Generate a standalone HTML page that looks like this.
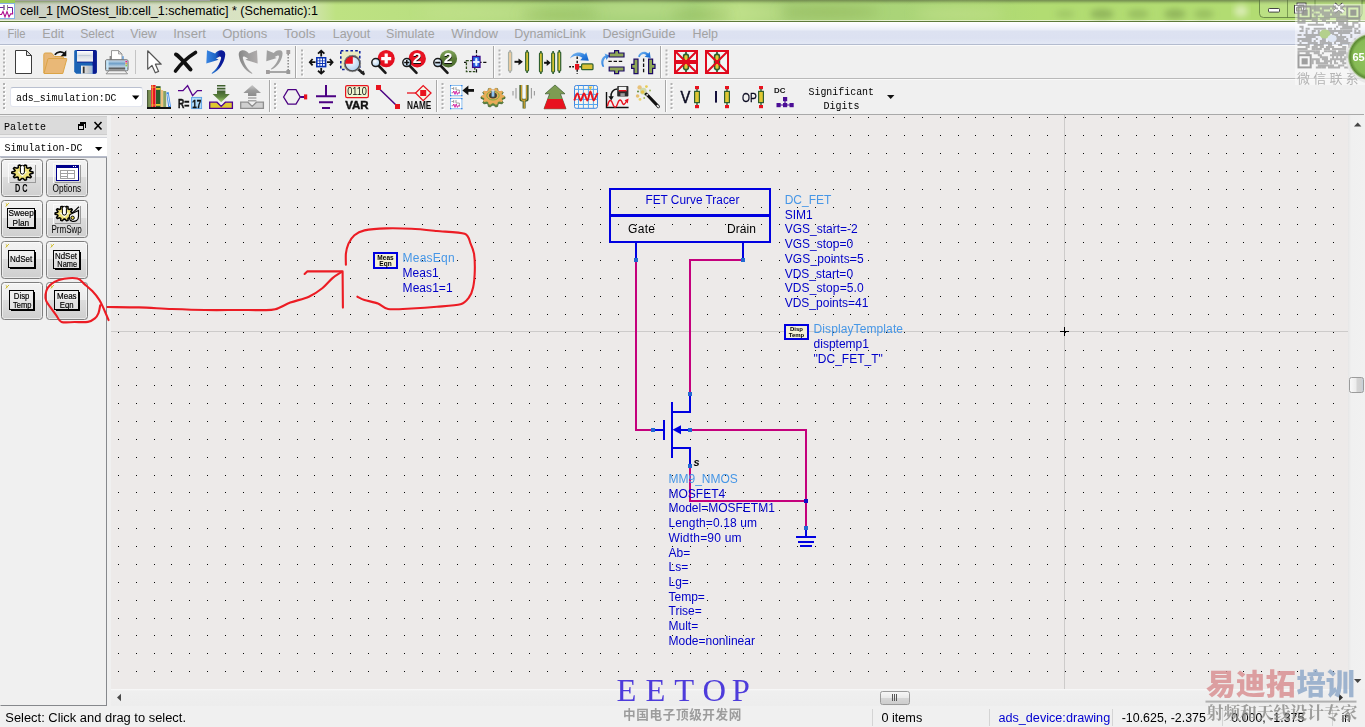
<!DOCTYPE html>
<html><head><meta charset="utf-8"><title>cell_1</title>
<style>
html,body{margin:0;padding:0}
body{width:1365px;height:727px;overflow:hidden;position:relative;background:#f0f0f0;font-family:"Liberation Sans",sans-serif;font-size:12px}
div{position:absolute;box-sizing:border-box}
svg{position:absolute;left:0;top:0}
.sans{font-family:"Liberation Sans",sans-serif}
.mono{font-family:"Liberation Mono","DejaVu Sans Mono",monospace}
</style></head><body>
<!-- title bar -->
<div style="left:0;top:0;width:1365px;height:22px;background:linear-gradient(to right,#c8cdc0 0,#ced3c6 60px,#d4dcc4 150px,#d9e4c2 250px,#d4e4b4 308px,#bee282 336px,#b8de80 450px,#a8d27a 600px,#a6d27a 690px,#b8de82 740px,#a8d078 790px,#aad478 900px,#b2dc72 1040px,#b2dc72 1365px)"></div>
<div style="left:0;top:0;width:1365px;height:22px;background:linear-gradient(to bottom,rgba(105,125,75,.85) 0,rgba(110,135,75,.6) 1.5px,rgba(120,150,80,.25) 3px,rgba(140,150,120,0) 5px,rgba(255,255,255,0) 19.5px,rgba(240,246,226,.85) 20px,rgba(240,246,226,.85) 21px)"></div><div style="left:15px;top:0;width:195px;height:1px;background:#a2a2a2"></div>
<svg width="1365" height="22" viewBox="0 0 1365 22"><defs><filter id="bl" x="-20%" y="-50%" width="140%" height="200%"><feGaussianBlur stdDeviation="3"/></filter><filter id="bl2" x="-20%" y="-50%" width="140%" height="200%"><feGaussianBlur stdDeviation="6"/></filter></defs>
<g filter="url(#bl)" fill="#7a9c4c" fill-opacity=".6"><ellipse cx="1065" cy="14" rx="10" ry="4" fill-opacity=".3"/><ellipse cx="1102" cy="14" rx="12" ry="5"/><ellipse cx="1138" cy="14" rx="11" ry="4.5" fill-opacity=".45"/><ellipse cx="1175" cy="14" rx="11" ry="5"/><ellipse cx="1204" cy="14" rx="10" ry="4.5" fill-opacity=".45"/></g>
<ellipse cx="1241" cy="11" rx="7" ry="6" fill="#e4f0c4" fill-opacity=".8" filter="url(#bl)"/>
<g filter="url(#bl2)" fill="#c6e294" fill-opacity=".55"><ellipse cx="480" cy="13" rx="60" ry="6"/><ellipse cx="640" cy="9" rx="50" ry="5"/><ellipse cx="745" cy="13" rx="40" ry="6"/><ellipse cx="960" cy="14" rx="45" ry="6"/></g>
<g filter="url(#bl2)" fill="#8aae50" fill-opacity=".45"><ellipse cx="560" cy="15" rx="40" ry="5"/><ellipse cx="700" cy="15" rx="30" ry="5"/><ellipse cx="830" cy="12" rx="50" ry="6"/></g>
</svg>
<div style="left:0;top:21px;width:1365px;height:1px;background:#5e7a3a"></div>
<!-- menu bar -->
<div style="left:0;top:22px;width:1365px;height:22px;background:linear-gradient(to bottom,#ffffff 0,#f6f7fc 4px,#e9edf7 8px,#dde2f1 9px,#dce1f1 16px,#e3e8f5 22px)"></div>
<div style="left:0;top:44px;width:1365px;height:1px;background:#b4bccf"></div>
<div style="left:0;top:45px;width:1365px;height:1px;background:#fbfbfb"></div>
<!-- toolbars -->
<div style="left:0;top:46px;width:1365px;height:68px;background:#f0f0f0"></div>
<div style="left:0;top:78px;width:1365px;height:1px;background:#b9b9b9"></div>
<div style="left:0;top:79px;width:1365px;height:1px;background:#fafafa"></div>
<div style="left:0;top:114px;width:1364px;height:1px;background:#a9a9a9"></div>
<!-- canvas -->
<div style="left:111px;top:115px;width:1237px;height:574px;background:#edeae9"></div>
<!-- canvas grid -->
<svg width="1365" height="727" viewBox="0 0 1365 727" shape-rendering="crispEdges">
<defs><mask id="rowmask" maskUnits="userSpaceOnUse" x="0" y="0" width="1365" height="727"><path fill="#fff" d="M111 117h1237v1h-1237zM111 135h1237v1h-1237zM111 153h1237v1h-1237zM111 171h1237v1h-1237zM111 189h1237v1h-1237zM111 207h1237v1h-1237zM111 224h1237v1h-1237zM111 242h1237v1h-1237zM111 260h1237v1h-1237zM111 278h1237v1h-1237zM111 296h1237v1h-1237zM111 314h1237v1h-1237zM111 332h1237v1h-1237zM111 350h1237v1h-1237zM111 367h1237v1h-1237zM111 385h1237v1h-1237zM111 403h1237v1h-1237zM111 421h1237v1h-1237zM111 439h1237v1h-1237zM111 457h1237v1h-1237zM111 475h1237v1h-1237zM111 492h1237v1h-1237zM111 510h1237v1h-1237zM111 528h1237v1h-1237zM111 546h1237v1h-1237zM111 564h1237v1h-1237zM111 582h1237v1h-1237zM111 600h1237v1h-1237zM111 618h1237v1h-1237zM111 635h1237v1h-1237zM111 653h1237v1h-1237zM111 671h1237v1h-1237z"/></mask></defs>
<path d="M1064 115v574h1v-574zM111 331h1237v1h-1237z" fill="#cdcbca"/>
<g mask="url(#rowmask)"><path fill="#0a0a0a" d="M118 115h1v574h-1zM136 115h1v574h-1zM154 115h1v574h-1zM171 115h1v574h-1zM189 115h1v574h-1zM207 115h1v574h-1zM225 115h1v574h-1zM243 115h1v574h-1zM261 115h1v574h-1zM279 115h1v574h-1zM297 115h1v574h-1zM314 115h1v574h-1zM332 115h1v574h-1zM350 115h1v574h-1zM368 115h1v574h-1zM386 115h1v574h-1zM404 115h1v574h-1zM422 115h1v574h-1zM439 115h1v574h-1zM457 115h1v574h-1zM475 115h1v574h-1zM493 115h1v574h-1zM511 115h1v574h-1zM529 115h1v574h-1zM547 115h1v574h-1zM565 115h1v574h-1zM582 115h1v574h-1zM600 115h1v574h-1zM618 115h1v574h-1zM636 115h1v574h-1zM654 115h1v574h-1zM672 115h1v574h-1zM690 115h1v574h-1zM707 115h1v574h-1zM725 115h1v574h-1zM743 115h1v574h-1zM761 115h1v574h-1zM779 115h1v574h-1zM797 115h1v574h-1zM815 115h1v574h-1zM833 115h1v574h-1zM850 115h1v574h-1zM868 115h1v574h-1zM886 115h1v574h-1zM904 115h1v574h-1zM922 115h1v574h-1zM940 115h1v574h-1zM958 115h1v574h-1zM975 115h1v574h-1zM993 115h1v574h-1zM1011 115h1v574h-1zM1029 115h1v574h-1zM1047 115h1v574h-1zM1065 115h1v574h-1zM1083 115h1v574h-1zM1101 115h1v574h-1zM1118 115h1v574h-1zM1136 115h1v574h-1zM1154 115h1v574h-1zM1172 115h1v574h-1zM1190 115h1v574h-1zM1208 115h1v574h-1zM1226 115h1v574h-1zM1243 115h1v574h-1zM1261 115h1v574h-1zM1279 115h1v574h-1zM1297 115h1v574h-1zM1315 115h1v574h-1zM1333 115h1v574h-1z"/></g>
</svg>
<!-- title & menu -->
<div style="left:0;top:0;width:15px;height:4px;background:#9ccb58"></div>
<div style="left:0;top:3px;width:15px;height:16px;background:#fff;border:1px solid #86b4e4;border-left:none"></div>
<svg width="1365" height="727" viewBox="0 0 1365 727" font-family="'Liberation Sans',sans-serif" font-size="12.5">
<path d="M0 7.5h4M4 5v5M7.5 5v5M7.5 7.5h5v5" stroke="#6a20a0" stroke-width="1" fill="none"/><path d="M4 5v5M7.5 5v5" stroke="#888" stroke-width="1" fill="none"/><path d="M0 14.5l1.5 0 1.5-3 2 5.4 2-5.4 2 5.4 1.6-3h2v-2" stroke="#b01090" stroke-width="1.1" fill="none"/>
<text x="20" y="14.8" textLength="298" lengthAdjust="spacingAndGlyphs" fill="#000">cell_1 [MOStest_lib:cell_1:schematic] * (Schematic):1</text>
<g fill="#a2a2a2">
<text x="7.5" y="37.7" textLength="18.1" lengthAdjust="spacingAndGlyphs">File</text>
<text x="42.3" y="37.7" textLength="21.7" lengthAdjust="spacingAndGlyphs">Edit</text>
<text x="80.2" y="37.7" textLength="33.9" lengthAdjust="spacingAndGlyphs">Select</text>
<text x="130.3" y="37.7" textLength="26.4" lengthAdjust="spacingAndGlyphs">View</text>
<text x="173.2" y="37.7" textLength="32.8" lengthAdjust="spacingAndGlyphs">Insert</text>
<text x="222.2" y="37.7" textLength="45.1" lengthAdjust="spacingAndGlyphs">Options</text>
<text x="284" y="37.7" textLength="31.4" lengthAdjust="spacingAndGlyphs">Tools</text>
<text x="332.7" y="37.7" textLength="37.6" lengthAdjust="spacingAndGlyphs">Layout</text>
<text x="386.1" y="37.7" textLength="48.5" lengthAdjust="spacingAndGlyphs">Simulate</text>
<text x="451.3" y="37.7" textLength="46.7" lengthAdjust="spacingAndGlyphs">Window</text>
<text x="514.2" y="37.7" textLength="71.6" lengthAdjust="spacingAndGlyphs">DynamicLink</text>
<text x="602.5" y="37.7" textLength="72.9" lengthAdjust="spacingAndGlyphs">DesignGuide</text>
<text x="692.4" y="37.7" textLength="25.6" lengthAdjust="spacingAndGlyphs">Help</text>
</g>
<path d="M1259.5 0V13.5Q1259.5 17.5 1263.5 17.5H1358Q1362 17.5 1362 13.5V0" fill="rgba(255,255,255,.12)" stroke="#4f6a34" stroke-opacity=".7" stroke-width="1"/><path d="M1287.5 0V17.5M1315 0V17.5" stroke="#4f6a34" stroke-opacity=".6" stroke-width="1"/>
<rect x="1268.5" y="8.5" width="11" height="3.6" rx=".8" fill="#fff" stroke="#444" stroke-width="1"/>
<g fill="none" stroke="#444" stroke-width="1"><rect x="1297" y="3" width="9" height="7.6" fill="#fff"/><rect x="1299" y="5" width="5" height="3.6" fill="#b8d080"/><rect x="1294.5" y="5.5" width="9" height="7.6" fill="#fff"/><rect x="1296.6" y="7.6" width="4.8" height="3.4" fill="#b8d080"/></g>
<path d="M1334 4.2L1343.5 12M1343.5 4.2L1334 12" stroke="#3c3c3c" stroke-width="4.4"/><path d="M1334 4.2L1343.5 12M1343.5 4.2L1334 12" stroke="#fff" stroke-width="2.5"/>
</svg>
<!-- schematic -->
<svg style="will-change:transform" width="1365" height="727" viewBox="0 0 1365 727" font-family="'Liberation Sans',sans-serif" font-size="12">
<g fill="none" stroke="#c4007c" stroke-width="2" shape-rendering="crispEdges">
<path d="M636 262V430H653"/>
<path d="M743 260H690V394"/>
<path d="M690 430H806V528"/>
<path d="M690 466V501H806"/>
</g>
<g fill="none" stroke="#0000e0" stroke-width="2" shape-rendering="crispEdges">
<rect x="610" y="189" width="160" height="53"/>
<path d="M609 215.5H771" stroke-width="3"/>
<path d="M636 243V260M743 243V260"/>
<!-- mosfet -->
<path d="M653 430H664M664 420V440M672 402V458M672 412H690V394M672 448H690V466M680 430H690"/>
<!-- ground -->
<path d="M806 528V537M796 537H816M798 542H814M800 546H812"/>
</g>
<path d="M672.5 429.8L681 425.3V434.3Z" fill="#0000e0"/>
<g fill="#2268d2" shape-rendering="crispEdges">
<rect x="634" y="258" width="4" height="4"/><rect x="741" y="258" width="4" height="4"/>
<rect x="651" y="428" width="4" height="4"/><rect x="688" y="392" width="4" height="4"/>
<rect x="688" y="428" width="4" height="4"/><rect x="688" y="464" width="4" height="4"/>
<rect x="804" y="526" width="4" height="4"/>
</g>
<rect x="804" y="499" width="4" height="4" fill="#1010c8" shape-rendering="crispEdges"/>
<!-- FET curve tracer labels -->
<text x="645.4" y="203.7" fill="#0000d0" textLength="94" lengthAdjust="spacingAndGlyphs">FET Curve Tracer</text>
<text x="628" y="233" fill="#000" textLength="27">Gate</text>
<text x="727" y="233" fill="#000" textLength="29">Drain</text>
<text x="693.5" y="466" fill="#000" font-size="11" font-weight="bold" font-style="italic">s</text>
<!-- DC_FET text -->
<g fill="#0000c8">
<text x="784.7" y="204" fill="#4696e6">DC_FET</text>
<text x="784.7" y="218.7">SIM1</text>
<text x="784.7" y="233.4">VGS_start=-2</text>
<text x="784.7" y="248.1">VGS_stop=0</text>
<text x="784.7" y="262.8" textLength="79">VGS_points=5</text>
<text x="784.7" y="277.5">VDS_start=0</text>
<text x="784.7" y="292.2" textLength="79">VDS_stop=5.0</text>
<text x="784.7" y="306.9">VDS_points=41</text>
<text x="813.6" y="333.3" fill="#4696e6" textLength="89.4">DisplayTemplate</text>
<text x="813.6" y="348">disptemp1</text>
<text x="813.6" y="362.5">"DC_FET_T"</text>
<!-- MOSFET text -->
<text x="668.5" y="483" fill="#4696e6">MM9_NMOS</text>
<text x="668.5" y="497.7">MOSFET4</text>
<text x="668.5" y="512.4">Model=MOSFETM1</text>
<text x="668.5" y="527.1" textLength="88.5">Length=0.18 um</text>
<text x="668.5" y="541.8" textLength="73">Width=90 um</text>
<text x="668.5" y="556.5">Ab=</text>
<text x="668.5" y="571.2">Ls=</text>
<text x="668.5" y="585.9">Lg=</text>
<text x="668.5" y="600.6">Temp=</text>
<text x="668.5" y="615.3">Trise=</text>
<text x="668.5" y="630">Mult=</text>
<text x="668.5" y="644.7">Mode=nonlinear</text>
<!-- MeasEqn text -->
<text x="402.6" y="262.3" fill="#4696e6" textLength="52">MeasEqn</text>
<text x="402.6" y="277.1">Meas1</text>
<text x="402.6" y="292" textLength="50">Meas1=1</text>
</g>
<!-- DispTemp icon -->
<rect x="785" y="324.5" width="23" height="14" fill="#f4f0d6" stroke="#0000e0" stroke-width="2" shape-rendering="crispEdges"/>
<text x="796.5" y="331" font-size="6" text-anchor="middle" fill="#000" font-weight="bold">Disp</text>
<text x="796.5" y="336.5" font-size="6" text-anchor="middle" fill="#000" font-weight="bold">Temp</text>
<!-- MeasEqn icon -->
<rect x="374" y="252.5" width="23" height="15" fill="#f4f0d6" stroke="#0000e0" stroke-width="2" shape-rendering="crispEdges"/>
<text x="385.5" y="259.5" font-size="6.5" text-anchor="middle" fill="#000" font-weight="bold">Meas</text>
<text x="385.5" y="265.5" font-size="6.5" text-anchor="middle" fill="#000" font-weight="bold">Eqn</text>
<!-- crosshair -->
<path d="M1060 331.5H1069M1064.5 327V336" stroke="#000" stroke-width="1" shape-rendering="crispEdges"/>
</svg>
<!-- palette -->
<div style="left:0;top:116px;width:107px;height:19px;background:#dbdbdb;border-top:1px solid #cfcfcf;border-bottom:1px solid #cdcdcd"></div>
<div style="left:0;top:137px;width:107px;height:20px;background:#fff;border-top:1px solid #d4d6dc;border-bottom:1px solid #b7bccb"></div>
<div style="left:0;top:157px;width:107px;height:549px;border:1px solid #86888c;border-top-color:#aeb2bc;border-left-color:#f0f0f0;background:#f0f0f0"></div>
<div style="left:1.2px;top:159.0px;width:41.5px;height:37.5px;border:1px solid #7e7e7e;border-radius:3.5px;background:linear-gradient(to bottom,#f3f3f3 0,#ebebeb 46%,#dddddd 47%,#cfcfcf 100%);box-shadow:inset 0 0 0 1px rgba(255,255,255,.55)"></div>
<div style="left:46.2px;top:159.0px;width:41.5px;height:37.5px;border:1px solid #7e7e7e;border-radius:3.5px;background:linear-gradient(to bottom,#f3f3f3 0,#ebebeb 46%,#dddddd 47%,#cfcfcf 100%);box-shadow:inset 0 0 0 1px rgba(255,255,255,.55)"></div>
<div style="left:1.2px;top:200.1px;width:41.5px;height:37.5px;border:1px solid #7e7e7e;border-radius:3.5px;background:linear-gradient(to bottom,#f3f3f3 0,#ebebeb 46%,#dddddd 47%,#cfcfcf 100%);box-shadow:inset 0 0 0 1px rgba(255,255,255,.55)"></div>
<div style="left:46.2px;top:200.1px;width:41.5px;height:37.5px;border:1px solid #7e7e7e;border-radius:3.5px;background:linear-gradient(to bottom,#f3f3f3 0,#ebebeb 46%,#dddddd 47%,#cfcfcf 100%);box-shadow:inset 0 0 0 1px rgba(255,255,255,.55)"></div>
<div style="left:1.2px;top:241.1px;width:41.5px;height:37.5px;border:1px solid #7e7e7e;border-radius:3.5px;background:linear-gradient(to bottom,#f3f3f3 0,#ebebeb 46%,#dddddd 47%,#cfcfcf 100%);box-shadow:inset 0 0 0 1px rgba(255,255,255,.55)"></div>
<div style="left:46.2px;top:241.1px;width:41.5px;height:37.5px;border:1px solid #7e7e7e;border-radius:3.5px;background:linear-gradient(to bottom,#f3f3f3 0,#ebebeb 46%,#dddddd 47%,#cfcfcf 100%);box-shadow:inset 0 0 0 1px rgba(255,255,255,.55)"></div>
<div style="left:1.2px;top:282.1px;width:41.5px;height:37.5px;border:1px solid #7e7e7e;border-radius:3.5px;background:linear-gradient(to bottom,#f3f3f3 0,#ebebeb 46%,#dddddd 47%,#cfcfcf 100%);box-shadow:inset 0 0 0 1px rgba(255,255,255,.55)"></div>
<div style="left:46.2px;top:282.1px;width:41.5px;height:37.5px;border:1px solid #7e7e7e;border-radius:3.5px;background:linear-gradient(to bottom,#f3f3f3 0,#ebebeb 46%,#dddddd 47%,#cfcfcf 100%);box-shadow:inset 0 0 0 1px rgba(255,255,255,.55)"></div>
<svg style="will-change:transform" width="112" height="727" viewBox="0 0 112 727" font-family="'Liberation Sans',sans-serif">
<g class="mono" font-family="'Liberation Mono',monospace" font-size="11" fill="#000">
<text x="4" y="130" textLength="42" lengthAdjust="spacingAndGlyphs">Palette</text>
<text x="4.5" y="151" textLength="78" lengthAdjust="spacingAndGlyphs">Simulation-DC</text>
</g>
<g fill="none" stroke="#000" stroke-width="1" shape-rendering="crispEdges"><path d="M80.5 122.5h5v5h-1M78.5 124.5h5v5h-5z"/><path d="M80 122.5h6M78 124.5h6" stroke-width="2"/></g>
<path d="M94.5 122L101.5 129.5M101.5 122L94.5 129.5" stroke="#000" stroke-width="1.6" fill="none"/>
<path d="M95 147h7.4l-3.7 4z" fill="#000"/>
<path d="M9.5 182.5H35.5V164.5" fill="none" stroke="#9a9a9a" stroke-width="1" shape-rendering="crispEdges"/><path d="M8.5 182.5V163.5H35.5" fill="none" stroke="#fafafa" stroke-width="1" shape-rendering="crispEdges"/>
<path d="M54.5 182.5H80.5V164.5" fill="none" stroke="#9a9a9a" stroke-width="1" shape-rendering="crispEdges"/><path d="M53.5 182.5V163.5H80.5" fill="none" stroke="#fafafa" stroke-width="1" shape-rendering="crispEdges"/>
<path d="M54.5 223.5H80.5V205.5" fill="none" stroke="#9a9a9a" stroke-width="1" shape-rendering="crispEdges"/><path d="M53.5 223.5V204.5H80.5" fill="none" stroke="#fafafa" stroke-width="1" shape-rendering="crispEdges"/>
<path d="M33.0 172.0L33.0 173.2L30.0 173.9L29.6 174.8L31.4 176.7L30.5 177.7L27.5 177.0L26.5 177.5L26.5 179.8L24.9 180.2L23.0 178.4L21.8 178.4L19.9 180.2L18.3 179.8L18.3 177.5L17.3 177.0L14.3 177.7L13.4 176.7L15.2 174.8L14.8 173.9L11.8 173.2L11.8 172.0L14.8 171.3L15.2 170.4L13.4 168.5L14.3 167.5L17.3 168.2L18.3 167.7L18.3 165.4L19.9 165.0L21.8 166.8L23.0 166.8L24.9 165.0L26.5 165.4L26.5 167.7L27.5 168.2L30.5 167.5L31.4 168.5L29.6 170.4L30.0 171.3Z" fill="#efe27a" stroke="#000" stroke-width="1.5" stroke-linejoin="round"/><path d="M18.4 171.6l4 4 4 -4" fill="none" stroke="#fff" stroke-width="1.2"/><rect x="20.4" y="165.4" width="4" height="8.6" rx="1.8" fill="#fff" stroke="#000" stroke-width="1"/>
<text x="15" y="191.8" font-size="10" font-weight="bold" textLength="12.6" lengthAdjust="spacingAndGlyphs">D C</text>
<rect x="56" y="165" width="22" height="15.5" fill="#fff" stroke="#00008c" stroke-width="1" shape-rendering="crispEdges"/>
<rect x="56" y="165" width="22" height="3" fill="#00008c" shape-rendering="crispEdges"/>
<rect x="73" y="166" width="1" height="1" fill="#fff"/><rect x="75" y="166" width="1" height="1" fill="#fff"/>
<path d="M56.5 168v12.5M56 180.5h22" stroke="#00008c" stroke-width="1.6" fill="none" shape-rendering="crispEdges"/>
<g fill="none" stroke="#a0a0a0" stroke-width="1" shape-rendering="crispEdges"><rect x="60.5" y="170.5" width="14" height="8"/><path d="M60.5 173.5h14M60.5 176.5h7M67.5 170.5v8"/></g>
<text x="52.6" y="191.5" font-size="10" textLength="28.6" lengthAdjust="spacingAndGlyphs">Options</text>
<rect x="7.5" y="208.5" width="27.0" height="19.0" fill="#f4f4f4" fill-opacity=".35" stroke="#000" stroke-width="1" shape-rendering="crispEdges"/><path d="M35.5 209.5V228.5H8.5" fill="none" stroke="#000" stroke-width="1" shape-rendering="crispEdges"/>
<text x="8.6" y="216.4" font-size="9.8" textLength="25.2" lengthAdjust="spacingAndGlyphs" stroke="#000" stroke-width=".2">Sweep</text>
<text x="12.6" y="225.6" font-size="9.8" textLength="16.6" lengthAdjust="spacingAndGlyphs" stroke="#000" stroke-width=".2">Plan</text>
<path d="M73.7 213.0L73.7 214.2L71.1 214.9L70.8 215.7L72.3 217.5L71.5 218.4L68.9 217.8L68.0 218.3L68.0 220.4L66.6 220.8L64.9 219.1L63.9 219.1L62.2 220.8L60.8 220.4L60.8 218.3L59.9 217.8L57.3 218.4L56.5 217.5L58.0 215.7L57.7 214.9L55.1 214.2L55.1 213.0L57.7 212.3L58.0 211.5L56.5 209.7L57.3 208.8L59.9 209.4L60.8 208.9L60.8 206.8L62.2 206.4L63.9 208.1L64.9 208.1L66.6 206.4L68.0 206.8L68.0 208.9L68.9 209.4L71.5 208.8L72.3 209.7L70.8 211.5L71.1 212.3Z" fill="#efe27a" stroke="#000" stroke-width="1.5" stroke-linejoin="round"/><path d="M60.4 212.6l4 4 4 -4" fill="none" stroke="#fff" stroke-width="1.2"/><rect x="62.4" y="206.4" width="4" height="8.6" rx="1.8" fill="#fff" stroke="#000" stroke-width="1"/>
<path d="M73 212.4l6-5.6" fill="none" stroke="#000" stroke-width="1.2"/><path d="M70 214.5L78.5 210.5V216.5C78.5 220 75.5 222 72 221.2C69 220.4 68.6 216.6 70 214.5Z" fill="#f4f4f4" stroke="#000" stroke-width="1.2"/><circle cx="72.6" cy="217.8" r="1.7" fill="#e9d84e" stroke="#000" stroke-width="1"/>
<text x="51.4" y="232.8" font-size="10" textLength="30.4" lengthAdjust="spacingAndGlyphs">PrmSwp</text>
<rect x="8.5" y="250.5" width="26.0" height="17.0" fill="#f4f4f4" fill-opacity=".35" stroke="#000" stroke-width="1" shape-rendering="crispEdges"/><path d="M35.5 251.5V268.5H9.5" fill="none" stroke="#000" stroke-width="1" shape-rendering="crispEdges"/>
<text x="10.0" y="262.0" font-size="9.8" textLength="22.2" lengthAdjust="spacingAndGlyphs" stroke="#000" stroke-width=".2">NdSet</text>
<rect x="53.5" y="250.5" width="26.0" height="17.5" fill="#f4f4f4" fill-opacity=".35" stroke="#000" stroke-width="1" shape-rendering="crispEdges"/><path d="M80.5 251.5V269.0H54.5" fill="none" stroke="#000" stroke-width="1" shape-rendering="crispEdges"/>
<text x="55.0" y="259.0" font-size="9.8" textLength="22.0" lengthAdjust="spacingAndGlyphs" stroke="#000" stroke-width=".2">NdSet</text>
<text x="57.3" y="266.8" font-size="9.8" textLength="19.7" lengthAdjust="spacingAndGlyphs" stroke="#000" stroke-width=".2">Name</text>
<rect x="9.5" y="290.5" width="24.0" height="19.0" fill="#f4f4f4" fill-opacity=".35" stroke="#000" stroke-width="1" shape-rendering="crispEdges"/><path d="M34.5 291.5V310.5H10.5" fill="none" stroke="#000" stroke-width="1" shape-rendering="crispEdges"/>
<text x="13.8" y="298.8" font-size="9.8" textLength="15.6" lengthAdjust="spacingAndGlyphs" stroke="#000" stroke-width=".2">Disp</text>
<text x="13.0" y="307.6" font-size="9.8" textLength="18.4" lengthAdjust="spacingAndGlyphs" stroke="#000" stroke-width=".2">Temp</text>
<rect x="54.5" y="290.5" width="24.0" height="19.0" fill="#f4f4f4" fill-opacity=".35" stroke="#000" stroke-width="1" shape-rendering="crispEdges"/><path d="M79.5 291.5V310.5H55.5" fill="none" stroke="#000" stroke-width="1" shape-rendering="crispEdges"/>
<text x="57.0" y="298.8" font-size="9.8" textLength="19.6" lengthAdjust="spacingAndGlyphs" stroke="#000" stroke-width=".2">Meas</text>
<text x="59.8" y="307.6" font-size="9.8" textLength="13.8" lengthAdjust="spacingAndGlyphs" stroke="#000" stroke-width=".2">Eqn</text>
<path d="M5.8 203.5l1.5 1.2 1.6-1.6M7.3 204.7l-1.5 1.8" stroke="#c9b200" stroke-width=".9" fill="none"/>
<path d="M5.8 244.5l1.5 1.2 1.6-1.6M7.3 245.7l-1.5 1.8" stroke="#c9b200" stroke-width=".9" fill="none"/>
<path d="M50.8 244.5l1.5 1.2 1.6-1.6M52.3 245.7l-1.5 1.8" stroke="#c9b200" stroke-width=".9" fill="none"/>
<path d="M5.8 285.5l1.5 1.2 1.6-1.6M7.3 286.7l-1.5 1.8" stroke="#c9b200" stroke-width=".9" fill="none"/>
<path d="M50.8 285.5l1.5 1.2 1.6-1.6M52.3 286.7l-1.5 1.8" stroke="#c9b200" stroke-width=".9" fill="none"/>
</svg>
<!-- toolbar 1 -->
<svg width="1365" height="727" viewBox="0 0 1365 727" font-family="'Liberation Sans',sans-serif">
<defs>
<g id="grip"><path d="M0 0h2v2h-2zM0 4h2v2h-2zM0 8h2v2h-2zM0 12h2v2h-2zM0 16h2v2h-2zM0 20h2v2h-2zM0 24h2v2h-2z" fill="#fff" transform="translate(1,1)"/><path d="M0 0h2v2h-2zM0 4h2v2h-2zM0 8h2v2h-2zM0 12h2v2h-2zM0 16h2v2h-2zM0 20h2v2h-2zM0 24h2v2h-2z" fill="#b2b2b2"/></g>
<g id="tsep"><rect x="0" y="0" width="1" height="32" fill="#a8a8a8"/><rect x="1" y="0" width="1" height="32" fill="#fdfdfd"/></g>
<g id="comp"><path d="M2 0v2M2 21v2" stroke="#2f5f2f" stroke-width="1.6" fill="none"/><rect x=".6" y="2" width="2.8" height="19" rx=".8" fill="#e6cc30" stroke="#2f5f2f" stroke-width="1.2"/></g>
<linearGradient id="gFold" x1="0" y1="1" x2="1" y2="0"><stop offset="0" stop-color="#fff"/><stop offset="1" stop-color="#9a9a9a"/></linearGradient>
<linearGradient id="gLabel" x1="0" y1="0" x2="0" y2="1"><stop offset="0" stop-color="#fff"/><stop offset=".45" stop-color="#d8dde4"/><stop offset="1" stop-color="#f4f4f4"/></linearGradient>
<linearGradient id="gShut" x1="0" y1="0" x2="1" y2="0"><stop offset="0" stop-color="#f4f4f4"/><stop offset=".6" stop-color="#c8c8c8"/><stop offset="1" stop-color="#9ab8dc"/></linearGradient>
<linearGradient id="gPrn" x1="0" y1="0" x2="0" y2="1"><stop offset="0" stop-color="#d8e6f2"/><stop offset=".35" stop-color="#6f9fc8"/><stop offset=".6" stop-color="#b8cfe2"/><stop offset=".8" stop-color="#5a5a5a"/><stop offset="1" stop-color="#e8e8e8"/></linearGradient>
<linearGradient id="gUndo" x1="0" y1="0" x2="1" y2="0"><stop offset="0" stop-color="#3a86e2"/><stop offset=".5" stop-color="#1b62c4"/><stop offset=".72" stop-color="#0a1a98"/><stop offset="1" stop-color="#0a1a98"/></linearGradient><linearGradient id="gRedoG" x1="0" y1="0" x2="1" y2="0"><stop offset="0" stop-color="#b0acac"/><stop offset=".6" stop-color="#9a9a9a"/><stop offset="1" stop-color="#868686"/></linearGradient>
<radialGradient id="gGlass" cx=".4" cy=".35" r=".7"><stop offset="0" stop-color="#fff"/><stop offset="1" stop-color="#a8cdee"/></radialGradient>
<radialGradient id="gRed" cx=".5" cy=".4" r=".6"><stop offset="0" stop-color="#f0202c"/><stop offset="1" stop-color="#e00a1c"/></radialGradient>
<linearGradient id="gGreen" x1="0" y1="0" x2="0" y2="1"><stop offset="0" stop-color="#86a860"/><stop offset=".5" stop-color="#5a7c38"/><stop offset="1" stop-color="#4c6c30"/></linearGradient>
<linearGradient id="gBlueArr" x1="0" y1="0" x2="1" y2="1"><stop offset="0" stop-color="#8cc4f4"/><stop offset=".6" stop-color="#2a7ede"/><stop offset="1" stop-color="#1060c8"/></linearGradient>
</defs>
<use href="#grip" x="3" y="49.5"/>
<use href="#tsep" x="295" y="46"/><use href="#grip" x="301" y="49.5"/>
<use href="#tsep" x="493" y="46"/><use href="#grip" x="498.5" y="49.5"/>
<use href="#tsep" x="660" y="46"/><use href="#grip" x="665.5" y="49.5"/>
<rect x="135" y="50" width="1" height="24" fill="#c4c4c4"/>
<g transform="translate(15,50)"><path d="M.5 .5H11.5L16.5 5.5V23.5H.5Z" fill="#fff" stroke="#3c3c3c" stroke-width="1"/><path d="M11.5 .5V5.5H16.5Z" fill="url(#gFold)" stroke="#3c3c3c" stroke-width="1" stroke-linejoin="round"/></g>
<g transform="translate(43,50)"><path d="M.8 23V4.5Q.8 3 2.3 3H8.5L11.5 6.5H19.5Q20.5 6.5 20.5 7.8V9" fill="#e8b777" stroke="#dca548" stroke-width="1"/><path d="M1 23.5L4.8 9.2Q5 8.5 5.8 8.5H23.2Q24 8.5 23.7 9.4L19.8 23.5Z" fill="#e9b877" stroke="#dba446" stroke-width="1"/><path d="M11.8 4.8C14.5 1.2 19.5 1 22 4.2" fill="none" stroke="#111" stroke-width="1.7"/><path d="M23.3 .2V6.2H17.6Z" fill="#111"/></g>
<g transform="translate(74,50)"><path d="M1.5 0H21Q22.8 0 22.8 1.8V22Q22.8 23.8 21 23.8H2.2L.2 21.8V1.5Q.2 0 1.5 0Z" fill="#1b63b5"/><path d="M3 0H21Q22.8 0 22.8 1.8V22Q22.8 23.8 21 23.8H18.5V12.5H3Z" fill="#0a1a90"/><rect x="3" y="1" width="16" height="10.6" fill="url(#gLabel)"/><path d="M4.5 5.5h12" stroke="#b8c4d4" stroke-width=".8"/><rect x="7" y="15.6" width="11.6" height="8.2" fill="url(#gShut)"/><rect x="8.8" y="16.6" width="1.8" height="6.6" fill="#333"/></g>
<g transform="translate(105,50)"><path d="M6.5 10V.6H13.5L17 4V10Z" fill="#fff" stroke="#8a8a8a" stroke-width=".9"/><path d="M13.5 .6V4H17Z" fill="#ddd" stroke="#8a8a8a" stroke-width=".7"/><rect x="4.6" y="6" width="1.8" height="4" fill="#888"/><rect x="17.2" y="6.2" width="1.6" height="3.8" fill="#6aa0d8"/><rect x=".6" y="9.8" width="22.4" height="11" rx="1.2" fill="url(#gPrn)" stroke="#6a6a6a" stroke-width="1"/><rect x="1.2" y="10.4" width="2.4" height="9.8" fill="#c6e4f6"/><rect x="20.2" y="10.4" width="2.2" height="9.8" fill="#c6e4f6"/><rect x="20.4" y="10.8" width="1.8" height="1.6" fill="#e8207c"/><rect x="20.4" y="12.8" width="1.8" height="1.6" fill="#f0a040"/><rect x="20.4" y="14.8" width="1.8" height="1.6" fill="#8acc50"/><path d="M4 20.8H19.6L22.6 23.8H1Z" fill="#f2f2f2" stroke="#7a7a7a" stroke-width=".8"/></g>
<g transform="translate(147,50)"><path d="M.7 .8V19.2L5 15.4L8.3 22.8L11.6 21.4L8.4 14.2H14.2Z" fill="#fff" stroke="#555" stroke-width="1.2" stroke-linejoin="round"/></g>
<g transform="translate(173,50)"><path d="M3 4.5C6 6 12 13 17.5 19.5" fill="none" stroke="#111" stroke-width="4" stroke-linecap="round"/><path d="M22.5 2.5C16 6.5 8 13.5 2.5 21" fill="none" stroke="#111" stroke-width="3.6" stroke-linecap="round"/></g>
<g transform="translate(206,50)"><path d="M1 .2L9.1 3.6C10.6 1.2 13.6 -.3 16.5 .4C18.8 1 19.8 3 19 6.6C17.9 12.9 13.7 20.6 6.3 23.8L5.5 23.2C10.2 19.9 14 13.6 15.1 8.3C15.3 7.2 14.7 6.4 13.6 6.6L10 8.6L12.6 9.7L.3 13.6Z" fill="url(#gUndo)"/></g>
<g transform="translate(258,50) scale(-1,1)"><path d="M1 .2L9.1 3.6C10.6 1.2 13.6 -.3 16.5 .4C18.8 1 19.8 3 19 6.6C17.9 12.9 13.7 20.6 6.3 23.8L5.5 23.2C10.2 19.9 14 13.6 15.1 8.3C15.3 7.2 14.7 6.4 13.6 6.6L10 8.6L12.6 9.7L.3 13.6Z" fill="url(#gRedoG)"/></g>
<g transform="translate(266,50)"><path transform="scale(.86,.82)" d="M1 .2L9.1 3.6C10.6 1.2 13.6 -.3 16.5 .4C18.8 1 19.8 3 19 6.6C17.9 12.9 13.7 20.6 6.3 23.8L5.5 23.2C10.2 19.9 14 13.6 15.1 8.3C15.3 7.2 14.7 6.4 13.6 6.6L10 8.6L12.6 9.7L.3 13.6Z" fill="#a0a0a0"/><path d="M2 22H22" stroke="#8e8e8e" stroke-width="1.5" fill="none"/><path d="M22.2 4V20" stroke="#8e8e8e" stroke-width="1.6" stroke-dasharray="1.4 1.6" fill="none"/><rect x="0" y="20" width="3.8" height="4" fill="#a09c9c"/><rect x="20.4" y="20" width="3.8" height="4" fill="#989898"/><rect x="20.4" y="0" width="3.8" height="4" fill="#a09c9c"/></g>
<g transform="translate(309,50)"><rect x="7" y="7" width="10.4" height="10.4" fill="#0a32b4"/><path d="M8.6 8.6h1.8v1.8h-1.8zM11.3 8.6h1.8v1.8h-1.8zM14 8.6h1.8v1.8h-1.8zM8.6 11.3h1.8v1.8h-1.8zM11.3 11.3h1.8v1.8h-1.8zM14 11.3h1.8v1.8h-1.8zM8.6 14h1.8v1.8h-1.8zM11.3 14h1.8v1.8h-1.8zM14 14h1.8v1.8h-1.8z" fill="#fff"/><g fill="none" stroke="#111" stroke-width="1.8"><path d="M12.2 6.5V1M9 3.6L12.2 .8L15.4 3.6"/><path d="M12.2 18V23.4M9 20.8L12.2 23.6L15.4 20.8"/><path d="M6.5 12.2H1M3.6 9L.8 12.2L3.6 15.4"/><path d="M18 12.2H23.4M20.8 9L23.6 12.2L20.8 15.4"/></g></g>
<g transform="translate(340,50)"><rect x=".8" y=".8" width="19" height="18.6" fill="#e9ecc2" stroke="#0a20a0" stroke-width="1.5" stroke-dasharray="2.6 2.2"/><path d="M18 19L23.5 23.8" stroke="#222" stroke-width="2.6" stroke-linecap="round"/><path d="M24.4 24.2L20.4 23.8L24 20.6Z" fill="#222"/><circle cx="12.4" cy="13.6" r="7.6" fill="url(#gGlass)" stroke="#4a4a4a" stroke-width="1.8"/><path d="M12.8 13.8V6.2A7.4 7.4 0 0 0 5.2 13.8Z" fill="#e8121e"/><circle cx="12.4" cy="13.6" r="8.2" fill="none" stroke="#9a9a9a" stroke-width=".7"/></g>
<g transform="translate(371,50)"><circle cx="15.2" cy="8.6" r="8.6" fill="url(#gRed)"/><path d="M10.2 8.6h10M15.2 3.6v10" stroke="#fff" stroke-width="3.2"/><path d="M7.5 15.5L14.5 22.8" stroke="#1a1a1a" stroke-width="2.6" stroke-linecap="round"/><circle cx="4.8" cy="12.6" r="4" fill="url(#gGlass)" stroke="#1a1a1a" stroke-width="1.5"/></g>
<g transform="translate(402,50)"><circle cx="15.2" cy="8.7" r="8.7" fill="url(#gRed)"/><text x="15.4" y="14.2" font-size="15.5" font-weight="bold" text-anchor="middle" fill="#111">2</text><text x="15" y="13.4" font-size="15.5" font-weight="bold" text-anchor="middle" fill="#fff">2</text><path d="M7.5 15.5L14.5 22.8" stroke="#1a1a1a" stroke-width="2.6" stroke-linecap="round"/><circle cx="4.8" cy="12.6" r="4" fill="url(#gGlass)" stroke="#1a1a1a" stroke-width="1.5"/><path d="M2.2 12.6h5.2M4.8 10v5.2" stroke="#111" stroke-width="1.5"/></g>
<g transform="translate(433,50)"><circle cx="15.4" cy="8.7" r="8.7" fill="url(#gGreen)"/><text x="15.4" y="14.2" font-size="15.5" font-weight="bold" text-anchor="middle" fill="#111">2</text><text x="15" y="13.4" font-size="15.5" font-weight="bold" text-anchor="middle" fill="#fff">2</text><path d="M7.5 15.5L14.5 22.8" stroke="#1a1a1a" stroke-width="2.6" stroke-linecap="round"/><circle cx="4.8" cy="12.6" r="4" fill="url(#gGlass)" stroke="#1a1a1a" stroke-width="1.5"/><path d="M2.2 12.6h5.2" stroke="#111" stroke-width="1.7"/></g>
<g transform="translate(464,50)"><path d="M12.5 0V24M0 12.4H24" stroke="#111" stroke-width="1.2" stroke-dasharray="3.2 1.6" fill="none"/><rect x="2.4" y="10.6" width="8.4" height="11" fill="#e4e4e4" stroke="#2c4a1c" stroke-width="1.3" stroke-dasharray="2.4 1.4"/><rect x="8.6" y="6.4" width="7.4" height="11" fill="#2a6ae6" stroke="#3a0a8c" stroke-width="1.3"/><path d="M12.3 9v6M9.8 12h5" stroke="#e6f2ff" stroke-width="2.2" stroke-linecap="round"/></g>
<g transform="translate(507.5,50)"><g opacity=".55"><path d="M2.6 0v2M2.6 21v2" stroke="#777" stroke-width="1.6"/><rect x="1" y="2" width="3.2" height="19" rx=".8" fill="#e8b060" stroke="#6a7a6a" stroke-width="1.1"/></g><path d="M7 11.8H13" stroke="#111" stroke-width="2"/><path d="M15.4 11.8L11 8.4V15.2Z" fill="#111"/><use href="#comp" x="17.6" y="0"/></g>
<g transform="translate(538.5,50)"><use href="#comp" x=".4" y="1"/><path d="M5.6 12.8H10" stroke="#111" stroke-width="2"/><path d="M12.2 12.8L8.2 9.6V16Z" fill="#111"/><use href="#comp" x="12.6" y="1"/><use href="#comp" x="18.8" y="0"/></g>
<g transform="translate(569,50)"><path d="M1.2 8.4C3 2.4 10.4 .6 15.8 4.4L17.2 2.2L19.8 10.8L11.2 10.2L13.4 7.8C9.6 4.6 4 5.2 1.2 8.4Z" fill="url(#gBlueArr)"/><path d="M8.2 6.5V24" stroke="#111" stroke-width="1.4" stroke-dasharray="2.6 1.6"/><path d="M.2 16.8H5.6" stroke="#111" stroke-width="1.4" stroke-dasharray="1.8 1.2"/><rect x="6" y="14" width="4.2" height="5.6" fill="#e8121e"/><path d="M10.2 16.8h2.4" stroke="#2f5f2f" stroke-width="1.6"/><rect x="12.6" y="13.9" width="11.4" height="5.8" rx="1" fill="#d8c036" stroke="#2f5f2f" stroke-width="1.2"/></g>
<g transform="translate(600,50)"><path d="M2.8 17C-.4 12 1.6 6.8 5.4 5.4L4.6 3.4L9.4 5.6L6.4 10L5.8 7.6C3.6 9.4 2.6 13 4.2 16.6Z" fill="url(#gBlueArr)"/><path d="M14.6 .6H18.6V3H24V7H9.2V3H14.6Z" fill="#8ea756" stroke="#1c0a64" stroke-width="1.2" stroke-linejoin="miter"/><path d="M8.4 11.4H24" stroke="#111" stroke-width="1.3" stroke-dasharray="3.4 1.8"/><path d="M9.2 17H24V21H18.6V23.6H14.6V21H9.2Z" fill="#8ea756" stroke="#1c0a64" stroke-width="1.2" stroke-linejoin="miter"/></g>
<g transform="translate(631,50)"><path d="M7 6.6C8.4 2 13.6 .2 17.2 3.4L18.8 1.8L19.6 8L13.6 6.8L15.4 5.2C13 3.2 9.8 4 8.8 7.2Z" fill="url(#gBlueArr)"/><path d="M3 9.2H7V23.6H3V18.4H.6V14.4H3Z" fill="#8ea756" stroke="#1c0a64" stroke-width="1.2" stroke-linejoin="miter"/><path d="M12.6 8.4V24" stroke="#111" stroke-width="1.3" stroke-dasharray="3.4 1.8"/><path d="M17.6 9.2H21.6V14.4H24V18.4H21.6V23.6H17.6Z" fill="#8ea756" stroke="#1c0a64" stroke-width="1.2" stroke-linejoin="miter"/></g>
<g transform="translate(674,50)"><rect x="1" y="1" width="22" height="22" fill="#f0f7f6"/><path d="M12 2v3M12 19v3" stroke="#1f4f1f" stroke-width="1.6"/><rect x="9.6" y="4.4" width="4.8" height="15.2" rx="2" fill="#e6c834" stroke="#2f5f2f" stroke-width="1.6"/><path d="M1.5 1.5L22.5 22.5M22.5 1.5L1.5 22.5" stroke="#e00a1e" stroke-width="2"/><rect x="1" y="10" width="22" height="4" fill="#e00a1e"/><rect x="1" y="1" width="22" height="22" fill="none" stroke="#e00a1e" stroke-width="2"/></g>
<g transform="translate(705,50)"><rect x="1" y="1" width="22" height="22" fill="#f0f7f6"/><path d="M12 2v3M12 19v3" stroke="#1f4f1f" stroke-width="1.6"/><rect x="9.6" y="4.4" width="4.8" height="15.2" rx="2" fill="#e6c834" stroke="#2f5f2f" stroke-width="1.6"/><path d="M1.5 1.5L22.5 22.5M22.5 1.5L1.5 22.5" stroke="#e00a1e" stroke-width="2"/><rect x="10" y="10.4" width="4" height="3.4" fill="#e00a1e"/><rect x="1" y="1" width="22" height="22" fill="none" stroke="#e00a1e" stroke-width="2"/></g>
</svg>
<!-- toolbar 2 -->
<div style="left:10px;top:87px;width:133px;height:20px;background:#fff;border:1px solid #e2e5ee;border-top-color:#b9c0d0;border-radius:3px"></div>
<svg style="will-change:transform" width="1365" height="727" viewBox="0 0 1365 727" font-family="'Liberation Sans',sans-serif">
<defs>
<linearGradient id="gDn" x1="0" y1="0" x2="0" y2="1"><stop offset="0" stop-color="#3f5f2e"/><stop offset=".55" stop-color="#5f8640"/><stop offset="1" stop-color="#a4d072"/></linearGradient>
<linearGradient id="gUp" x1="0" y1="0" x2="0" y2="1"><stop offset="0" stop-color="#c9c9c9"/><stop offset=".5" stop-color="#9c9c9c"/><stop offset="1" stop-color="#8c8c8c"/></linearGradient>
<g id="vcomp"><rect x="1" y="0" width="4" height="3.2" fill="#e8121e"/><rect x="1" y="19" width="4" height="3.2" fill="#e8121e"/><path d="M3 3v2.5M3 16.5v2.5" stroke="#2f5f2f" stroke-width="1.4"/><rect x=".6" y="5.4" width="4.8" height="11.2" fill="#e0c832" stroke="#2f5f2f" stroke-width="1.2"/></g>
</defs>
<use href="#grip" x="3" y="83"/>
<use href="#tsep" x="269" y="80"/><use href="#grip" x="274" y="83"/>
<use href="#tsep" x="436" y="80"/><use href="#grip" x="441.5" y="83"/>
<use href="#tsep" x="665" y="80"/><use href="#grip" x="670.5" y="83"/>
<text x="16" y="101" font-family="'Liberation Mono',monospace" font-size="11" textLength="100.5" lengthAdjust="spacingAndGlyphs" fill="#000">ads_simulation:DC</text>
<path d="M132 95.6h7.4l-3.7 4.2z" fill="#000"/>
<g transform="translate(147,85)"><rect x=".6" y="5" width="3.4" height="17.5" fill="#7c9354"/><rect x="0" y="5" width="1.2" height="17.5" fill="#4a5a38"/><rect x="4.2" y="0" width="4.4" height="22.5" fill="#e8101e"/><path d="M5.6 0v22.5M4.2 2.2h4.4M4.2 20h4.4" stroke="#f0c040" stroke-width=".8"/><rect x="9" y="1.2" width="4.6" height="21.3" fill="#2c5c2c"/><rect x="9" y="3" width="4.6" height="1.8" fill="#e8cc30"/><rect x="9" y="19" width="4.6" height="1.8" fill="#e8cc30"/><rect x="13.8" y="5" width="2.4" height="17.5" fill="#f0c080"/><rect x="16.2" y="6" width="3" height="16.5" fill="#8aa262"/><path d="M19.4 7.5L21.6 7L24 22H21.2Z" fill="#3a86e6"/><path d="M20.6 9l2 12" stroke="#fff" stroke-width=".8"/><rect x="0" y="22" width="24" height="2" fill="#111"/></g>
<g transform="translate(178,85)"><path d="M0 5.6H5L9.6 .6L14.6 10.6L19.4 5.6H24" fill="none" stroke="#55008c" stroke-width="1.3"/><rect x="13.6" y="12.4" width="10" height="11.2" fill="#aedaf8" stroke="#5aa0e6" stroke-width=".9"/><text x="0" y="23.2" font-size="12.5" font-weight="bold" fill="#111" stroke="#111" stroke-width=".45" textLength="11.4" lengthAdjust="spacingAndGlyphs">R=</text><text x="14.2" y="23" font-size="11.5" font-weight="bold" fill="#111" stroke="#111" stroke-width=".35" textLength="9" lengthAdjust="spacingAndGlyphs">17</text></g>
<g transform="translate(209,85)"><path d="M8 0h8.4v1.6H8zM8 2.8h8.4v1.6H8z" fill="#3f5f2e"/><path d="M8 5.6H16.4V9H20.8L12.2 17.2L3.6 9H8Z" fill="url(#gDn)"/><path d="M.7 17.2H8L12.2 21.4L16.4 17.2H23.4V23.4H.7Z" fill="#dfc830" stroke="#4b0090" stroke-width="1.3"/></g>
<g transform="translate(240,85)"><path d="M12.2 0L21 8H16.4V11H8V8H3.4Z" fill="url(#gUp)"/><path d="M8 12.2h8.4v1.6H8zM8 15h8.4v1.6H8z" fill="#a6a6a6"/><path d="M.7 17.2H8L12.2 21.4L16.4 17.2H23.4V23.4H.7Z" fill="#cfcfcf" stroke="#8e8e8e" stroke-width="1.3"/></g>
<g transform="translate(283,85)"><path d="M.6 12L5 4.6H13L17.2 12L13 19.2H5Z" fill="none" stroke="#4b0082" stroke-width="1.3"/><path d="M17.2 12H21.5" stroke="#4b0082" stroke-width="2"/><rect x="21" y="9.4" width="3.2" height="5" fill="#e8121e"/></g>
<g transform="translate(314,85)"><path d="M12 0V11M2 11.2H22M5 17.2H19M8 23H16" stroke="#4b0082" stroke-width="2" fill="none"/></g>
<g transform="translate(345,85)"><rect x=".6" y=".6" width="22.8" height="12" rx="1.6" fill="#eef5d2" stroke="#e8121e" stroke-width="1.2"/><text x="2.2" y="10.4" font-size="10.5" fill="#111" textLength="19.8" lengthAdjust="spacingAndGlyphs">0110</text><text x=".2" y="23.8" font-size="10.6" font-weight="bold" fill="#111" textLength="23.4" lengthAdjust="spacingAndGlyphs" stroke="#111" stroke-width=".4">VAR</text></g>
<g transform="translate(376,85)"><path d="M3.5 4L21 21" stroke="#4b0082" stroke-width="1.5"/><rect x="0" y="0" width="5" height="5" fill="#e8121e"/><rect x="19" y="19" width="5" height="5" fill="#e8121e"/></g>
<g transform="translate(407,85)"><path d="M0 8H9" stroke="#e8121e" stroke-width="1.3"/><path d="M8.6 8L16.2 .6L24 8L16.2 15.6Z" fill="#f1f6e6" stroke="#e8121e" stroke-width="1.3"/><rect x="13.2" y="5" width="6" height="6" fill="#e8121e"/><text x="0" y="23.8" font-size="10" font-weight="bold" fill="#111" textLength="24.4" lengthAdjust="spacingAndGlyphs">NAME</text></g>
<g transform="translate(450,85)"><g><rect x=".5" y=".5" width="11.4" height="10.2" fill="#fff" stroke="#8cc0f0" stroke-width="1"/><path d="M1.5 3.5h2.2M3.7 2v3M6 2v3h3.4v3.4M6 3.5h-.2M1.5 7.8h1.6" stroke="#888" stroke-width=".8" fill="none"/><path d="M3 7.8l.8-1.8 1.2 3.4 1.2-3.4 1.2 3.4 .8-1.6h1.6" stroke="#d0109c" stroke-width=".9" fill="none"/><path d="M0 0h1.2v1.2H0zM11.2 0h1.2v1.2h-1.2zM0 10h1.2v1.2H0zM11.2 10h1.2v1.2h-1.2z" fill="#2a7ae6"/></g><g transform="translate(0,13)"><rect x=".5" y=".5" width="11.4" height="10.2" fill="#fff" stroke="#8cc0f0" stroke-width="1"/><path d="M1.5 3.5h2.2M3.7 2v3M6 2v3h3.4v3.4M6 3.5h-.2M1.5 7.8h1.6" stroke="#888" stroke-width=".8" fill="none"/><path d="M3 7.8l.8-1.8 1.2 3.4 1.2-3.4 1.2 3.4 .8-1.6h1.6" stroke="#d0109c" stroke-width=".9" fill="none"/><path d="M0 0h1.2v1.2H0zM11.2 0h1.2v1.2h-1.2zM0 10h1.2v1.2H0zM11.2 10h1.2v1.2h-1.2z" fill="#2a7ae6"/></g><path d="M17 5.4H24" stroke="#111" stroke-width="2.8"/><path d="M12.4 5.4L18.4 .6V10.2Z" fill="#111"/></g>
<g transform="translate(481,85)"><path d="M24.0 11.8L24.0 13.4L21.3 14.4L20.9 15.5L22.2 17.6L21.1 18.8L18.2 18.4L17.0 19.1L16.6 21.5L14.8 21.9L12.8 20.3L11.2 20.3L9.2 21.9L7.4 21.5L7.0 19.1L5.8 18.4L2.9 18.8L1.8 17.6L3.1 15.5L2.7 14.4L0.0 13.4L0.0 11.8L2.7 10.8L3.1 9.7L1.8 7.6L2.9 6.4L5.8 6.8L7.0 6.1L7.4 3.7L9.2 3.3L11.2 4.9L12.8 4.9L14.8 3.3L16.6 3.7L17.0 6.1L18.2 6.8L21.1 6.4L22.2 7.6L20.9 9.7L21.3 10.8Z" fill="#5f8a3c" stroke="#44602c" stroke-width=".8"/><path d="M23.6 10.7L23.6 12.1L21.0 13.0L20.6 14.0L21.9 15.9L20.8 17.0L18.0 16.6L16.8 17.3L16.4 19.3L14.7 19.8L12.7 18.3L11.3 18.3L9.3 19.8L7.6 19.3L7.2 17.3L6.0 16.6L3.2 17.0L2.1 15.9L3.4 14.0L3.0 13.0L0.4 12.1L0.4 10.7L3.0 9.8L3.4 8.8L2.1 6.9L3.2 5.8L6.0 6.2L7.2 5.5L7.6 3.5L9.3 3.0L11.3 4.5L12.7 4.5L14.7 3.0L16.4 3.5L16.8 5.5L18.0 6.2L20.8 5.8L21.9 6.9L20.6 8.8L21.0 9.8Z" fill="#e9ab58"/><ellipse cx="12" cy="10.6" rx="6.2" ry="4.4" fill="#e9ab58" stroke="#7fae40" stroke-width="1"/><ellipse cx="12" cy="10.6" rx="4" ry="3" fill="#3c4030"/><rect x="10.4" y="5.4" width="3.2" height="6.6" rx="1.2" fill="#8ec4ec" stroke="#556" stroke-width=".6"/><rect x="10.4" y="4.6" width="3.2" height="2" rx="1" fill="#d8d8d8"/></g>
<g transform="translate(512,85)"><path d="M1 6v4.5M4 3v10.5M19.4 3v10.5M22.4 6v4.5" stroke="#9a9a9a" stroke-width="1.1"/><path d="M7.4 0V14Q7.4 16.6 10.6 16.6V23.6H13.6V16.6Q16.6 16.6 16.6 14V0H13.6V13.6H10.4V0Z" fill="#3f5f2f"/><path d="M8.8 0V13.4Q8.8 15.6 11.6 15.8V23.6H12.8V15.8Q15.4 15.4 15.2 13.4V0H14.2V14.6H9.9V0Z" fill="#e2aa34"/><rect x="10.6" y="0" width="3" height="13.6" fill="#f8f8f8"/></g>
<g transform="translate(543,85)"><path d="M12 0L22 8.8H17.4L23 23.8H1L6.6 8.8H2Z" fill="#7d9c52" stroke="#3c5a30" stroke-width=".7"/><path d="M4.6 14L1 23.8H23L19.4 14Z" fill="#e8121e"/></g>
<g transform="translate(574,85)"><rect x=".5" y=".5" width="23" height="22.8" rx="1.8" fill="#f8f5ee" stroke="#3f86e0" stroke-width="1"/><path d="M4.5 .5V23.3M9.4 .5V23.3M14.4 .5V23.3M19.4 .5V23.3M.5 4.4H23.5M.5 9.4H23.5M.5 14.4H23.5M.5 19.5H23.5" stroke="#55a6ee" stroke-width="1" fill="none"/><path d="M.3 15.5C1.4 13 2.2 8.5 3.4 8.5S5.6 15.5 6.7 15.5S8.9 8.5 10 8.5S12.3 15.5 13.4 15.5S15.4 6.5 16.4 6.5S18.5 15.5 19.6 15.5S22 11 23.6 8" fill="none" stroke="#e8121e" stroke-width="1.9"/><path d="M14.6 1.4h3.6L16.4 5.2Z" fill="#e4c03c"/></g>
<g transform="translate(605,85)"><path d="M1.5 7V22.5H23.6" fill="none" stroke="#111" stroke-width="1.4"/><rect x="12.2" y="1" width="11.2" height="10.6" rx=".8" fill="#2c2c2c"/><rect x="13.8" y="1.8" width="7.6" height="4.2" fill="#f2f2f2"/><rect x="13.8" y="5" width="7.6" height="1.4" fill="#e8121e"/><rect x="15.4" y="8.2" width="4.4" height="3.4" fill="#9a9a9a"/><path d="M12.2 4C8 4 5.6 8 6 12" fill="none" stroke="#111" stroke-width="1.4"/><path d="M3.4 11.2h5.4L6.2 15.6Z" fill="#111"/><path d="M2.4 21.4C4 14 6 14 7.6 18.6S11 23.4 12.6 18.6S16 14 17.6 18.4C18.6 20.6 20 19 21.6 16" fill="none" stroke="#e8121e" stroke-width="1.4"/><path d="M23.6 13.4L22.8 18.4L19.6 15.2Z" fill="#e8121e"/></g>
<g transform="translate(636,85)"><circle cx="3.6" cy="2.4" r="2.2" fill="#e9c27a"/><circle cx="10.4" cy="1.6" r="1.4" fill="#e8cc50"/><circle cx="1.6" cy="11" r="1.8" fill="#e6c070"/><circle cx="4" cy="14.4" r="1.4" fill="#ead46a"/><circle cx="7.2" cy="6.2" r="3.4" fill="#c8d49a" opacity=".8"/><circle cx="6.6" cy="7" r="1.8" fill="#e6c446"/><circle cx="14" cy="5.6" r="1" fill="#9ab85a"/><circle cx="8.2" cy="13" r=".9" fill="#9ab85a"/><circle cx="2" cy="6.6" r="1" fill="#5f8a3c"/><circle cx="9.6" cy="9.2" r="1.2" fill="#5f8a3c"/><path d="M10.4 9L22.4 21.6" stroke="#111" stroke-width="3" stroke-linecap="round"/><path d="M21.4 20.6l1 1" stroke="#eee" stroke-width="1.6" stroke-linecap="round"/><path d="M10.6 9.2l1.2 1.2" stroke="#ddd" stroke-width="2"/></g>
<g transform="translate(679,85)"><text x="1.4" y="17.8" font-size="16.5" fill="#0a0a20" textLength="9.8" lengthAdjust="spacingAndGlyphs" stroke="#0a0a20" stroke-width=".5">V</text><use href="#vcomp" x="15" y="1"/></g>
<g transform="translate(710,85)"><rect x="5" y="6" width="2" height="11.6" fill="#14103c"/><use href="#vcomp" x="14" y="1"/></g>
<g transform="translate(741,85)"><text x="1" y="17.4" font-size="13.4" fill="#0a0a20" textLength="14.8" lengthAdjust="spacingAndGlyphs" stroke="#0a0a20" stroke-width=".3">OP</text><use href="#vcomp" x="17" y="1"/></g>
<g transform="translate(772,85)"><text x="2" y="7.8" font-size="7.8" font-weight="bold" fill="#111" textLength="11.4" lengthAdjust="spacingAndGlyphs">DC</text><path d="M13 14v6M6.6 20h13" stroke="#4b0e96" stroke-width="1.2"/><rect x="11" y="12" width="4.2" height="4.2" fill="#4b0e96"/><rect x="4.5" y="18" width="4.2" height="4.2" fill="#4b0e96"/><rect x="11" y="18" width="4.2" height="4.2" fill="#4b0e96"/><rect x="17.5" y="18" width="4.2" height="4.2" fill="#4b0e96"/></g>
<g font-family="'Liberation Mono',monospace" font-size="11" fill="#000"><text x="808.5" y="94.6" textLength="65.5" lengthAdjust="spacingAndGlyphs">Significant</text><text x="823.6" y="108.6" textLength="36" lengthAdjust="spacingAndGlyphs">Digits</text></g>
<path d="M887 95h7.4l-3.7 4z" fill="#111"/>
</svg>
<!-- scrollbars & status -->
<div style="left:111px;top:689px;width:1254px;height:17px;background:linear-gradient(to bottom,#f9f9f9 0,#efefef 2px,#ededed 100%)"></div>
<div style="left:1348px;top:115px;width:17px;height:574px;background:linear-gradient(to right,#e6e6e6 0,#f0f0f0 3px,#f1f1f1 100%)"></div>
<div style="left:1348px;top:689px;width:17px;height:17px;background:#f0f0f0"></div>
<div style="left:0;top:706px;width:1365px;height:21px;background:#f0f0f0"></div>
<div style="left:880px;top:690.5px;width:29.5px;height:14px;border:1px solid #9b9b9b;border-radius:2.5px;background:linear-gradient(to bottom,#f6f6f6 0,#e9e9e9 50%,#d6d6d6 51%,#cdcdcd 100%)"></div>
<div style="left:1349px;top:377.3px;width:14.7px;height:15.4px;border:1px solid #9b9b9b;border-radius:2.5px;background:linear-gradient(to right,#f8f8f8 0,#ececec 45%,#d4d4d4 55%,#d0d0d0 85%,#c4d0dc 100%)"></div>
<div style="left:872px;top:709px;width:1px;height:17px;background:#d4d4d4"></div>
<div style="left:989px;top:709px;width:1px;height:17px;background:#d4d4d4"></div>
<div style="left:1112px;top:709px;width:1px;height:17px;background:#d4d4d4"></div>
<div style="left:1222px;top:709px;width:1px;height:17px;background:#d4d4d4"></div>
<div style="left:1331.5px;top:709px;width:1px;height:17px;background:#d4d4d4"></div>
<svg width="1365" height="727" viewBox="0 0 1365 727" font-family="'Liberation Sans',sans-serif" font-size="12.5">
<path d="M117 697.5l4-3.8v7.6z" fill="#4a4a4a"/><path d="M1343 697.5l-4-3.8v7.6z" fill="#333"/>
<path d="M1354 126.4l3.7-4 3.7 4z" fill="#444"/><path d="M1354 679l3.7 4 3.7-4z" fill="#444"/>
<path d="M892.5 694v7M894.5 694v7M896.5 694v7" stroke="#555" stroke-width="1"/>
<text x="5.3" y="721.8" textLength="180.7" lengthAdjust="spacingAndGlyphs" fill="#000">Select: Click and drag to select.</text>
<text x="881.4" y="721.8" textLength="40.9" lengthAdjust="spacingAndGlyphs" fill="#000">0 items</text>
<text x="998.4" y="721.8" textLength="111.8" lengthAdjust="spacingAndGlyphs" fill="#0000d0">ads_device:drawing</text>
<text x="1121.7" y="721.8" textLength="84.2" lengthAdjust="spacingAndGlyphs" fill="#000">-10.625, -2.375</text>
<text x="1231.3" y="721.8" textLength="73.0" lengthAdjust="spacingAndGlyphs" fill="#000">0.000, -1.375</text>
<text x="1341.7" y="721.8" textLength="8.6" lengthAdjust="spacingAndGlyphs" fill="#000">in</text>
</svg>
<!-- red annotations -->
<svg width="1365" height="727" viewBox="0 0 1365 727">
<g fill="none" stroke="#ec1c24" stroke-width="2.1" stroke-linecap="round" stroke-linejoin="round">
<path d="M100.2 305.2C99.9 306.5 99.4 310.9 98.5 313.1C97.6 315.3 96.7 316.9 94.9 318.4C93.1 319.9 91.3 321.3 87.9 321.9C84.5 322.5 79.1 322.0 74.7 322.0C70.3 322.0 64.6 323.0 61.5 321.9C58.4 320.8 58.2 317.8 56.3 315.3C54.4 312.8 51.8 309.3 50.1 306.9C48.4 304.5 47.0 302.9 46.2 300.8C45.4 298.8 45.2 296.8 45.5 294.6C45.8 292.4 46.4 289.7 47.9 287.6C49.4 285.5 51.8 283.4 54.5 281.9C57.2 280.4 60.4 279.4 64.2 278.8C68.0 278.2 74.0 277.7 77.4 278.6C80.8 279.5 81.9 282.0 84.4 284.1C86.9 286.2 89.8 288.5 92.3 291.1C94.8 293.7 97.4 297.0 99.3 299.9C101.2 302.8 102.2 305.3 103.7 308.7C105.2 312.1 107.8 318.2 108.6 320.1"/>
<path d="M107.5 307.0C112.7 307.1 128.2 307.1 138.9 307.4C149.6 307.7 160.9 308.6 171.9 309.0C182.9 309.4 193.9 309.8 204.9 310.0C215.9 310.2 228.6 310.0 237.8 310.0C247.0 310.0 253.8 310.2 260.0 310.1C266.2 310.0 270.1 310.6 275.2 309.3C280.2 308.1 284.7 304.7 290.3 302.6C295.9 300.5 303.6 299.1 308.9 296.7C314.2 294.3 318.4 291.3 322.3 288.2C326.2 285.1 329.3 280.8 332.5 278.1C335.7 275.4 340.2 272.9 341.7 271.9"/>
<path d="M304.6 273.9L307.2 271.4L342.6 271.4L342.9 307.6"/>
<path d="M345.9 264.7C345.9 263.2 345.6 256.5 345.9 253.7C346.2 250.9 347.4 246.1 348.5 243.6C349.6 241.1 352.3 237.0 354.4 235.2C356.5 233.4 360.2 231.3 364.5 230.4C368.8 229.5 380.1 228.6 386.4 228.4C392.7 228.2 404.9 228.5 411.6 228.8C418.3 229.1 429.8 230.3 436.9 231.0C444.0 231.7 460.2 232.1 464.7 233.8C469.2 235.5 469.4 240.9 470.6 243.6C471.8 246.3 473.4 250.1 474.0 253.7C474.6 257.3 474.9 266.0 474.8 270.5C474.7 275.0 473.9 283.8 473.1 287.4C472.3 291.0 470.6 295.3 468.9 297.5C467.2 299.7 464.8 303.0 460.5 304.2C456.2 305.4 443.4 306.2 436.9 306.8C430.4 307.4 418.1 308.2 411.6 308.5C405.1 308.8 392.6 309.7 388.1 309.0C383.6 308.3 381.0 304.6 377.9 303.4C374.8 302.2 367.2 300.9 364.5 300.0C361.8 299.1 358.3 297.1 357.4 296.7"/>
</g>
</svg>
<!-- watermarks -->
<svg width="1365" height="727" viewBox="0 0 1365 727">
<rect x="1295" y="4" width="70" height="81" fill="#fff" fill-opacity=".42"/>
<path d="M1311.7 5.5h4.1v2.0h-4.1zM1315.8 5.5h2.0v2.0h-2.0zM1317.8 5.5h4.1v2.0h-4.1zM1321.9 5.5h10.1v2.0h-10.1zM1332.0 5.5h4.1v2.0h-4.1zM1340.1 5.5h2.0v2.0h-2.0zM1342.2 5.5h2.0v2.0h-2.0zM1344.2 5.5h2.0v2.0h-2.0zM1311.7 7.5h6.1v2.0h-6.1zM1317.8 7.5h2.0v2.0h-2.0zM1321.9 7.5h2.0v2.0h-2.0zM1323.9 7.5h6.1v2.0h-6.1zM1332.0 7.5h2.0v2.0h-2.0zM1336.1 7.5h2.0v2.0h-2.0zM1340.1 7.5h2.0v2.0h-2.0zM1313.7 9.6h2.0v2.0h-2.0zM1315.8 9.6h4.1v2.0h-4.1zM1319.8 9.6h2.0v2.0h-2.0zM1321.9 9.6h2.0v2.0h-2.0zM1330.0 9.6h2.0v2.0h-2.0zM1311.7 11.6h2.0v2.0h-2.0zM1319.8 11.6h4.1v2.0h-4.1zM1323.9 11.6h2.0v2.0h-2.0zM1325.9 11.6h6.1v2.0h-6.1zM1332.0 11.6h6.1v2.0h-6.1zM1338.1 11.6h4.1v2.0h-4.1zM1313.7 13.6h6.1v2.0h-6.1zM1321.9 13.6h8.1v2.0h-8.1zM1332.0 13.6h8.1v2.0h-8.1zM1315.8 15.6h2.0v2.0h-2.0zM1323.9 15.6h6.1v2.0h-6.1zM1330.0 15.6h16.2v2.0h-16.2zM1311.7 17.7h6.1v2.0h-6.1zM1319.8 17.7h10.1v2.0h-10.1zM1336.1 17.7h8.1v2.0h-8.1zM1344.2 17.7h2.0v2.0h-2.0zM1297.5 19.7h2.0v2.0h-2.0zM1301.6 19.7h2.0v2.0h-2.0zM1303.6 19.7h2.0v2.0h-2.0zM1311.7 19.7h6.1v2.0h-6.1zM1321.9 19.7h4.1v2.0h-4.1zM1336.1 19.7h2.0v2.0h-2.0zM1338.1 19.7h10.1v2.0h-10.1zM1358.4 19.7h2.0v2.0h-2.0zM1297.5 21.7h8.1v2.0h-8.1zM1315.8 21.7h2.0v2.0h-2.0zM1325.9 21.7h2.0v2.0h-2.0zM1328.0 21.7h2.0v2.0h-2.0zM1332.0 21.7h4.1v2.0h-4.1zM1338.1 21.7h6.1v2.0h-6.1zM1346.2 21.7h2.0v2.0h-2.0zM1352.3 21.7h2.0v2.0h-2.0zM1354.3 21.7h4.1v2.0h-4.1zM1307.7 23.8h8.1v2.0h-8.1zM1315.8 23.8h6.1v2.0h-6.1zM1321.9 23.8h2.0v2.0h-2.0zM1338.1 23.8h8.1v2.0h-8.1zM1346.2 23.8h2.0v2.0h-2.0zM1352.3 23.8h2.0v2.0h-2.0zM1358.4 23.8h2.0v2.0h-2.0zM1299.5 25.8h4.1v2.0h-4.1zM1336.1 25.8h2.0v2.0h-2.0zM1342.2 25.8h12.2v2.0h-12.2zM1358.4 25.8h2.0v2.0h-2.0zM1301.6 27.8h2.0v2.0h-2.0zM1305.6 27.8h2.0v2.0h-2.0zM1307.7 27.8h2.0v2.0h-2.0zM1313.7 27.8h4.1v2.0h-4.1zM1317.8 27.8h6.1v2.0h-6.1zM1323.9 27.8h2.0v2.0h-2.0zM1328.0 27.8h4.1v2.0h-4.1zM1334.0 27.8h2.0v2.0h-2.0zM1340.1 27.8h6.1v2.0h-6.1zM1346.2 27.8h6.1v2.0h-6.1zM1354.3 27.8h4.1v2.0h-4.1zM1299.5 29.9h4.1v2.0h-4.1zM1305.6 29.9h2.0v2.0h-2.0zM1311.7 29.9h2.0v2.0h-2.0zM1313.7 29.9h2.0v2.0h-2.0zM1317.8 29.9h2.0v2.0h-2.0zM1321.9 29.9h4.1v2.0h-4.1zM1325.9 29.9h14.2v2.0h-14.2zM1340.1 29.9h2.0v2.0h-2.0zM1342.2 29.9h10.1v2.0h-10.1zM1354.3 29.9h2.0v2.0h-2.0zM1358.4 29.9h2.0v2.0h-2.0zM1305.6 31.9h2.0v2.0h-2.0zM1311.7 31.9h2.0v2.0h-2.0zM1317.8 31.9h10.1v2.0h-10.1zM1328.0 31.9h6.1v2.0h-6.1zM1338.1 31.9h6.1v2.0h-6.1zM1344.2 31.9h6.1v2.0h-6.1zM1354.3 31.9h2.0v2.0h-2.0zM1356.4 31.9h4.1v2.0h-4.1zM1297.5 33.9h4.1v2.0h-4.1zM1303.6 33.9h2.0v2.0h-2.0zM1305.6 33.9h16.2v2.0h-16.2zM1332.0 33.9h4.1v2.0h-4.1zM1336.1 33.9h2.0v2.0h-2.0zM1340.1 33.9h2.0v2.0h-2.0zM1350.3 33.9h2.0v2.0h-2.0zM1305.6 35.9h10.1v2.0h-10.1zM1325.9 35.9h2.0v2.0h-2.0zM1336.1 35.9h2.0v2.0h-2.0zM1338.1 35.9h6.1v2.0h-6.1zM1344.2 35.9h2.0v2.0h-2.0zM1350.3 35.9h2.0v2.0h-2.0zM1297.5 38.0h6.1v2.0h-6.1zM1303.6 38.0h2.0v2.0h-2.0zM1305.6 38.0h6.1v2.0h-6.1zM1315.8 38.0h2.0v2.0h-2.0zM1321.9 38.0h2.0v2.0h-2.0zM1323.9 38.0h2.0v2.0h-2.0zM1328.0 38.0h2.0v2.0h-2.0zM1336.1 38.0h4.1v2.0h-4.1zM1340.1 38.0h2.0v2.0h-2.0zM1342.2 38.0h2.0v2.0h-2.0zM1346.2 38.0h2.0v2.0h-2.0zM1354.3 38.0h2.0v2.0h-2.0zM1358.4 38.0h2.0v2.0h-2.0zM1297.5 40.0h2.0v2.0h-2.0zM1301.6 40.0h8.1v2.0h-8.1zM1309.7 40.0h2.0v2.0h-2.0zM1313.7 40.0h2.0v2.0h-2.0zM1319.8 40.0h6.1v2.0h-6.1zM1328.0 40.0h10.1v2.0h-10.1zM1338.1 40.0h2.0v2.0h-2.0zM1340.1 40.0h4.1v2.0h-4.1zM1344.2 40.0h4.1v2.0h-4.1zM1299.5 42.0h2.0v2.0h-2.0zM1307.7 42.0h4.1v2.0h-4.1zM1311.7 42.0h2.0v2.0h-2.0zM1313.7 42.0h4.1v2.0h-4.1zM1319.8 42.0h2.0v2.0h-2.0zM1321.9 42.0h2.0v2.0h-2.0zM1323.9 42.0h8.1v2.0h-8.1zM1334.0 42.0h2.0v2.0h-2.0zM1340.1 42.0h14.2v2.0h-14.2zM1358.4 42.0h2.0v2.0h-2.0zM1297.5 44.1h2.0v2.0h-2.0zM1299.5 44.1h8.1v2.0h-8.1zM1307.7 44.1h2.0v2.0h-2.0zM1313.7 44.1h10.1v2.0h-10.1zM1328.0 44.1h4.1v2.0h-4.1zM1338.1 44.1h4.1v2.0h-4.1zM1348.2 44.1h6.1v2.0h-6.1zM1305.6 46.1h2.0v2.0h-2.0zM1307.7 46.1h2.0v2.0h-2.0zM1311.7 46.1h6.1v2.0h-6.1zM1319.8 46.1h4.1v2.0h-4.1zM1325.9 46.1h4.1v2.0h-4.1zM1330.0 46.1h4.1v2.0h-4.1zM1342.2 46.1h4.1v2.0h-4.1zM1348.2 46.1h4.1v2.0h-4.1zM1356.4 46.1h2.0v2.0h-2.0zM1297.5 48.1h8.1v2.0h-8.1zM1305.6 48.1h2.0v2.0h-2.0zM1311.7 48.1h2.0v2.0h-2.0zM1313.7 48.1h2.0v2.0h-2.0zM1315.8 48.1h4.1v2.0h-4.1zM1319.8 48.1h2.0v2.0h-2.0zM1323.9 48.1h6.1v2.0h-6.1zM1332.0 48.1h6.1v2.0h-6.1zM1338.1 48.1h8.1v2.0h-8.1zM1354.3 48.1h4.1v2.0h-4.1zM1297.5 50.2h2.0v2.0h-2.0zM1299.5 50.2h14.2v2.0h-14.2zM1313.7 50.2h2.0v2.0h-2.0zM1315.8 50.2h4.1v2.0h-4.1zM1323.9 50.2h2.0v2.0h-2.0zM1325.9 50.2h2.0v2.0h-2.0zM1328.0 50.2h4.1v2.0h-4.1zM1332.0 50.2h4.1v2.0h-4.1zM1338.1 50.2h6.1v2.0h-6.1zM1344.2 50.2h2.0v2.0h-2.0zM1348.2 50.2h4.1v2.0h-4.1zM1354.3 50.2h2.0v2.0h-2.0zM1356.4 50.2h4.1v2.0h-4.1zM1297.5 52.2h2.0v2.0h-2.0zM1305.6 52.2h4.1v2.0h-4.1zM1313.7 52.2h6.1v2.0h-6.1zM1321.9 52.2h2.0v2.0h-2.0zM1332.0 52.2h6.1v2.0h-6.1zM1338.1 52.2h4.1v2.0h-4.1zM1342.2 52.2h6.1v2.0h-6.1zM1348.2 52.2h2.0v2.0h-2.0zM1354.3 52.2h6.1v2.0h-6.1zM1317.8 54.2h4.1v2.0h-4.1zM1330.0 54.2h2.0v2.0h-2.0zM1332.0 54.2h2.0v2.0h-2.0zM1334.0 54.2h2.0v2.0h-2.0zM1336.1 54.2h8.1v2.0h-8.1zM1346.2 54.2h4.1v2.0h-4.1zM1352.3 54.2h2.0v2.0h-2.0zM1358.4 54.2h2.0v2.0h-2.0zM1319.8 56.2h8.1v2.0h-8.1zM1332.0 56.2h2.0v2.0h-2.0zM1336.1 56.2h2.0v2.0h-2.0zM1340.1 56.2h2.0v2.0h-2.0zM1344.2 56.2h10.1v2.0h-10.1zM1356.4 56.2h4.1v2.0h-4.1zM1311.7 58.3h2.0v2.0h-2.0zM1313.7 58.3h6.1v2.0h-6.1zM1321.9 58.3h6.1v2.0h-6.1zM1330.0 58.3h4.1v2.0h-4.1zM1334.0 58.3h6.1v2.0h-6.1zM1340.1 58.3h2.0v2.0h-2.0zM1342.2 58.3h4.1v2.0h-4.1zM1348.2 58.3h4.1v2.0h-4.1zM1352.3 58.3h4.1v2.0h-4.1zM1311.7 60.3h2.0v2.0h-2.0zM1315.8 60.3h4.1v2.0h-4.1zM1323.9 60.3h2.0v2.0h-2.0zM1325.9 60.3h2.0v2.0h-2.0zM1328.0 60.3h4.1v2.0h-4.1zM1334.0 60.3h2.0v2.0h-2.0zM1340.1 60.3h4.1v2.0h-4.1zM1348.2 60.3h2.0v2.0h-2.0zM1350.3 60.3h2.0v2.0h-2.0zM1356.4 60.3h2.0v2.0h-2.0zM1358.4 60.3h2.0v2.0h-2.0zM1311.7 62.3h2.0v2.0h-2.0zM1315.8 62.3h6.1v2.0h-6.1zM1321.9 62.3h6.1v2.0h-6.1zM1330.0 62.3h2.0v2.0h-2.0zM1334.0 62.3h2.0v2.0h-2.0zM1336.1 62.3h2.0v2.0h-2.0zM1342.2 62.3h4.1v2.0h-4.1zM1354.3 62.3h2.0v2.0h-2.0zM1358.4 62.3h2.0v2.0h-2.0zM1317.8 64.4h2.0v2.0h-2.0zM1319.8 64.4h10.1v2.0h-10.1zM1330.0 64.4h2.0v2.0h-2.0zM1332.0 64.4h2.0v2.0h-2.0zM1338.1 64.4h2.0v2.0h-2.0zM1340.1 64.4h2.0v2.0h-2.0zM1342.2 64.4h2.0v2.0h-2.0zM1350.3 64.4h2.0v2.0h-2.0zM1358.4 64.4h2.0v2.0h-2.0zM1315.8 66.4h4.1v2.0h-4.1zM1319.8 66.4h2.0v2.0h-2.0zM1321.9 66.4h2.0v2.0h-2.0zM1323.9 66.4h2.0v2.0h-2.0zM1328.0 66.4h4.1v2.0h-4.1zM1332.0 66.4h8.1v2.0h-8.1zM1344.2 66.4h2.0v2.0h-2.0zM1346.2 66.4h2.0v2.0h-2.0zM1350.3 66.4h2.0v2.0h-2.0zM1358.4 66.4h2.0v2.0h-2.0z" fill="#999" fill-opacity=".75"/>
<rect x="1298.5" y="6.5" width="12.2" height="12.2" fill="none" stroke="#8f8f8f" stroke-opacity=".85" stroke-width="2.0"/><rect x="1301.6" y="9.6" width="6.1" height="6.1" fill="#8f8f8f" fill-opacity=".85"/>
<rect x="1347.2" y="6.5" width="12.2" height="12.2" fill="none" stroke="#8f8f8f" stroke-opacity=".85" stroke-width="2.0"/><rect x="1350.3" y="9.6" width="6.1" height="6.1" fill="#8f8f8f" fill-opacity=".85"/>
<rect x="1298.5" y="55.2" width="12.2" height="12.2" fill="none" stroke="#8f8f8f" stroke-opacity=".85" stroke-width="2.0"/><rect x="1301.6" y="58.3" width="6.1" height="6.1" fill="#8f8f8f" fill-opacity=".85"/>
<ellipse cx="1325" cy="34" rx="5.5" ry="4.6" fill="#b4d08c"/><ellipse cx="1332" cy="38.5" rx="4.6" ry="3.8" fill="#dfe6f4"/>
<text x="1297" y="82.5" font-family="'Noto Sans CJK SC','WenQuanYi Zen Hei',sans-serif" font-size="13" fill="#b4b4b4" letter-spacing="3.2">微信联系</text>
<defs><radialGradient id="gBall" cx=".5" cy=".5" r=".5"><stop offset="0" stop-color="#92c660"/><stop offset=".78" stop-color="#86ba54"/><stop offset=".92" stop-color="#5c8a34"/><stop offset="1" stop-color="#c9d9b8"/></radialGradient></defs>
<circle cx="1371.5" cy="57.5" r="26" fill="#dcdcdc" fill-opacity=".6"/><circle cx="1371.5" cy="57" r="23.6" fill="url(#gBall)"/>
<text x="1352.4" y="61" font-family="'Liberation Sans',sans-serif" font-size="11" font-weight="bold" fill="#fff">65</text>
<g font-family="'Liberation Serif',serif" font-size="32.6" fill="#3c28d8" fill-opacity=".9">
<text x="616.6" y="701.4">E</text>
<text x="645.6" y="701.4">E</text>
<text x="674.2" y="701.4">T</text>
<text x="702.6" y="701.4">O</text>
<text x="731.8" y="701.4">P</text>
</g>
<path d="M616 680.5h135" stroke="none"/>
<text x="623" y="719.4" font-family="'Noto Sans CJK SC','WenQuanYi Zen Hei',sans-serif" font-weight="bold" font-size="12.6" textLength="118.4" lengthAdjust="spacing" fill="#9c9c9c">中国电子顶级开发网</text>
<g font-family="'Noto Sans CJK SC','WenQuanYi Zen Hei',sans-serif" font-weight="900" font-size="29">
<text x="1206" y="695.4" textLength="89.5" lengthAdjust="spacingAndGlyphs" fill="#d88e90" fill-opacity=".82">易迪拓</text>
<text x="1296.5" y="695.4" textLength="58.5" lengthAdjust="spacingAndGlyphs" fill="#8fa9c9" fill-opacity=".85">培训</text>
</g>
<rect x="1205.5" y="700.6" width="151" height="2" fill="#a9a9a9" fill-opacity=".9"/>
<text x="1206.6" y="719.4" font-family="'Noto Serif CJK SC','Noto Sans CJK SC',serif" font-weight="bold" font-size="17" textLength="151" lengthAdjust="spacing" fill="#8e8e8c" fill-opacity=".85">射频和天线设计专家</text>
</svg>
</body></html>
